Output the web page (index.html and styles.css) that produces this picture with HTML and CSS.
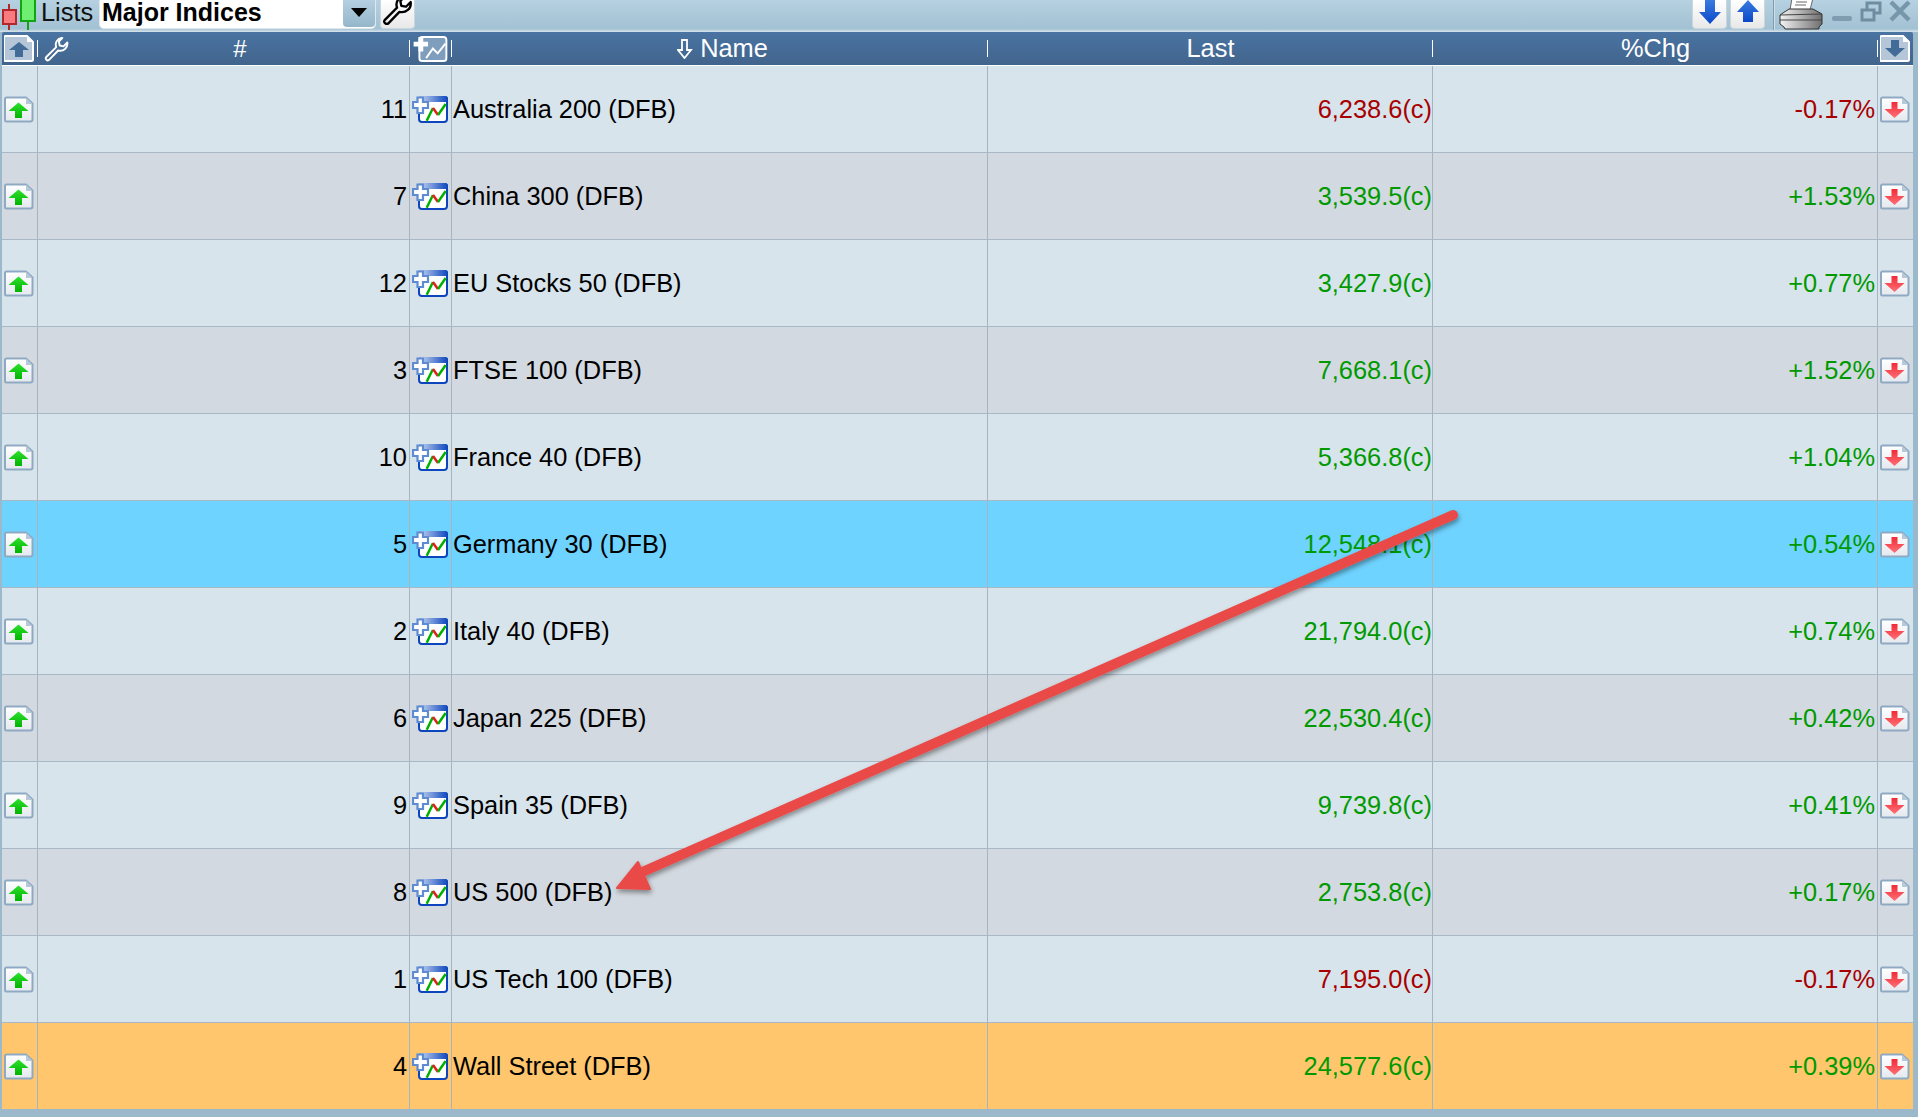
FILE: index.html
```html
<!DOCTYPE html>
<html lang="en">
<head>
<meta charset="utf-8">
<title>Major Indices</title>
<link rel="stylesheet" href="styles.css">
</head>
<body>
<svg class="defs" width="0" height="0">
  <defs>
    <linearGradient id="gDocBody" x1="0" y1="0" x2="0" y2="1"><stop offset="0" stop-color="#ffffff"/><stop offset="1" stop-color="#e4e9ee"/></linearGradient>
    <linearGradient id="gGreen" x1="0" y1="0" x2="0" y2="1"><stop offset="0" stop-color="#2fe02f"/><stop offset="1" stop-color="#00b400"/></linearGradient>
    <linearGradient id="gRed" x1="0" y1="0" x2="0" y2="1"><stop offset="0" stop-color="#f02b35"/><stop offset="1" stop-color="#ff7078"/></linearGradient>
    <linearGradient id="gBlue" x1="0" y1="0" x2="0" y2="1"><stop offset="0" stop-color="#3a7be0"/><stop offset="1" stop-color="#0a48c8"/></linearGradient>
    <linearGradient id="gChartTop" x1="0" y1="0" x2="1" y2="0"><stop offset="0" stop-color="#c8d8f2"/><stop offset="1" stop-color="#0c45bd"/></linearGradient>
    <linearGradient id="gPrinter" x1="0" y1="0" x2="1" y2="0"><stop offset="0" stop-color="#f4f4f4"/><stop offset="1" stop-color="#6e6e6e"/></linearGradient>
    <symbol id="i-up" viewBox="0 0 30 27">
      <path d="M2.500 1.500h19.500l6.500 6v16a2 2 0 0 1-2 2h-24a1.500 1.500 0 0 1-1.500-1.500v-21a1.500 1.500 0 0 1 1.500-1.500z" fill="url(#gDocBody)" stroke="#8fa9c3" stroke-width="2"/>
      <path d="M22 1.500v6.500h6.500z" fill="#b7c8d9"/>
      <path d="M14.500 6.500l10 8.500h-6.500v7h-7v-7h-6.500z" fill="url(#gGreen)"/>
    </symbol>
    <symbol id="i-down" viewBox="0 0 30 27">
      <path d="M2.500 1.500h19.500l6.500 6v16a2 2 0 0 1-2 2h-24a1.500 1.500 0 0 1-1.500-1.500v-21a1.500 1.500 0 0 1 1.500-1.500z" fill="url(#gDocBody)" stroke="#8fa9c3" stroke-width="2"/>
      <path d="M22 1.500v6.500h6.500z" fill="#b7c8d9"/>
      <path d="M11.500 6h6v7h7l-10 9-10-9h7z" fill="url(#gRed)"/>
    </symbol>
    <symbol id="i-chart" viewBox="0 0 36 27">
      <rect x="7" y="1" width="28" height="25" rx="3" fill="#fff" stroke="#0c45bd" stroke-width="2"/>
      <rect x="7" y="0" width="29" height="6" rx="2.500" fill="url(#gChartTop)"/>
      <path d="M14.700 24.700L21 12" fill="none" stroke="#00b000" stroke-width="2.500"/>
      <path d="M21 12l5 7" fill="none" stroke="#e81c1c" stroke-width="2.500"/>
      <path d="M26 19l7.700-11" fill="none" stroke="#00b000" stroke-width="2.500"/>
      <path d="M5.500 1.500h5.500v4.500h5v6h-5v5h-5.500v-5h-4.500v-6h4.500z" fill="#fff" stroke="#5f8bd2" stroke-width="2.200"/>
    </symbol>
    <symbol id="i-wrench" viewBox="0 0 34 32">
      <path d="M3 26.500l13-13c-2-5 1-11 7-12l1 0-4.500 5 1 5 5 1 5-5c1 7-5 12-12 10.500l-11.500 12c-2.500 2.500-6.500-1-4-3.500z" fill="none" stroke="currentColor" stroke-width="2.500" stroke-linejoin="round"/>
    </symbol>
  </defs>
</svg>

<header class="toolbar">
  <svg class="candles" width="35" height="30" viewBox="0 0 35 30">
    <path d="M7 4v26" stroke="#b3262c" stroke-width="2"/>
    <rect x="1" y="10" width="13" height="14" fill="#f77b7f" stroke="#b3262c" stroke-width="2"/>
    <path d="M26 0v30" stroke="#13a413" stroke-width="2"/>
    <rect x="19" y="-2" width="14" height="23" fill="#6fef6f" stroke="#13a413" stroke-width="2"/>
  </svg>
  <span class="lists-label">Lists</span>
  <div class="select">
    <span class="select-text">Major Indices</span>
    <span class="select-btn"><span class="caret"></span></span>
  </div>
  <button class="tool-btn wrench-btn"><svg width="32" height="30"><use href="#i-wrench"/></svg></button>
  <div class="spacer"></div>
  <button class="tool-btn arrow-btn">
    <svg width="22" height="26" viewBox="0 0 22 26"><path d="M6 0h10v12h6l-11 12-11-12h6z" fill="url(#gBlue)"/></svg>
  </button>
  <button class="tool-btn arrow-btn">
    <svg width="22" height="26" viewBox="0 0 22 26"><path d="M11 0l11 12h-6v10h-10v-10h-6z" fill="url(#gBlue)"/></svg>
  </button>
  <span class="tool-sep"></span>
  <svg class="printer" width="44" height="30" viewBox="0 0 44 30">
    <path d="M13 -2h21l-3 12h-20z" fill="#fff" stroke="#666"/>
    <path d="M17 2h11M16 5h11" stroke="#9a9a9a" stroke-width="1.500"/>
    <path d="M1 15l9-6h24l9 5v10l-3 3v2h-34l-1-2-4-3z" fill="url(#gPrinter)" stroke="#333"/>
    <path d="M1 15l41-1M1 20h42" stroke="#444"/>
  </svg>
  <div class="win-controls">
    <svg width="22" height="26" viewBox="0 0 22 26"><rect x="1" y="16" width="20" height="5" rx="2" fill="#7e9db0"/></svg>
    <svg width="22" height="26" viewBox="0 0 22 26"><path d="M7 9v-6h13v10h-6" fill="none" stroke="#6f8da0" stroke-width="3"/><rect x="2" y="10" width="12" height="10" fill="none" stroke="#6f8da0" stroke-width="3"/></svg>
    <svg width="22" height="26" viewBox="0 0 22 26"><path d="M2 2l18 18M20 2l-18 18" stroke="#7696a9" stroke-width="4.500"/></svg>
  </div>
</header>

<main class="grid">
  <div class="row head">
    <div class="cell"><svg class="doc" width="30" height="27" viewBox="0 0 30 27"><path d="M2 1h21l6 6v17.500a1.500 1.500 0 0 1-1.500 1.500h-26a1.500 1.500 0 0 1-1.500-1.500v-22a1.500 1.500 0 0 1 1.500-1.500z" fill="#b5c6d8" stroke="#fff" stroke-width="2"/><path d="M23 1v6h6z" fill="#fff"/><path d="M15 7l10 8h-6v7h-8v-7h-6z" fill="#436b97"/></svg></div>
    <div class="cell c-num"><svg class="head-wrench" width="26" height="26"><use href="#i-wrench"/></svg><span class="head-hash">#</span></div>
    <div class="cell"><svg class="chart-head" width="36" height="26" viewBox="0 0 36 27"><rect x="7" y="1" width="28" height="25" rx="3" fill="#7f9dbc" stroke="#fff" stroke-width="2"/><path d="M14 23l7-10 5 5 8-10" fill="none" stroke="#fff" stroke-width="2"/><path d="M6 1h5v5h5v5h-5v5h-5v-5h-5v-5h5z" fill="#fff"/></svg></div>
    <div class="cell center head-name"><svg class="sort" width="16" height="20" viewBox="0 0 16 20"><path d="M5 1h5v10h4l-6.500 8-6.500-8h4z" fill="none" stroke="#fff" stroke-width="1.800"/></svg>Name</div>
    <div class="cell center">Last</div>
    <div class="cell center">%Chg</div>
    <div class="cell"><svg class="doc" width="30" height="27" viewBox="0 0 30 27"><path d="M2 1h21l6 6v17.500a1.500 1.500 0 0 1-1.500 1.500h-26a1.500 1.500 0 0 1-1.500-1.500v-22a1.500 1.500 0 0 1 1.500-1.500z" fill="#b5c6d8" stroke="#fff" stroke-width="2"/><path d="M23 1v6h6z" fill="#fff"/><path d="M11 5h8v8h6l-10 9-10-9h6z" fill="#436b97"/></svg></div>
  </div>

  <div class="row light"><div class="cell"><svg class="doc" width="30" height="27"><use href="#i-up"/></svg></div><div class="cell num">11</div><div class="cell"><svg class="chart" width="36" height="27"><use href="#i-chart"/></svg></div><div class="cell name">Australia 200 (DFB)</div><div class="cell num last neg">6,238.6(c)</div><div class="cell num neg">-0.17%</div><div class="cell"><svg class="doc" width="30" height="27"><use href="#i-down"/></svg></div></div>
  <div class="row dark"><div class="cell"><svg class="doc" width="30" height="27"><use href="#i-up"/></svg></div><div class="cell num">7</div><div class="cell"><svg class="chart" width="36" height="27"><use href="#i-chart"/></svg></div><div class="cell name">China 300 (DFB)</div><div class="cell num last pos">3,539.5(c)</div><div class="cell num pos">+1.53%</div><div class="cell"><svg class="doc" width="30" height="27"><use href="#i-down"/></svg></div></div>
  <div class="row light"><div class="cell"><svg class="doc" width="30" height="27"><use href="#i-up"/></svg></div><div class="cell num">12</div><div class="cell"><svg class="chart" width="36" height="27"><use href="#i-chart"/></svg></div><div class="cell name">EU Stocks 50 (DFB)</div><div class="cell num last pos">3,427.9(c)</div><div class="cell num pos">+0.77%</div><div class="cell"><svg class="doc" width="30" height="27"><use href="#i-down"/></svg></div></div>
  <div class="row dark"><div class="cell"><svg class="doc" width="30" height="27"><use href="#i-up"/></svg></div><div class="cell num">3</div><div class="cell"><svg class="chart" width="36" height="27"><use href="#i-chart"/></svg></div><div class="cell name">FTSE 100 (DFB)</div><div class="cell num last pos">7,668.1(c)</div><div class="cell num pos">+1.52%</div><div class="cell"><svg class="doc" width="30" height="27"><use href="#i-down"/></svg></div></div>
  <div class="row light"><div class="cell"><svg class="doc" width="30" height="27"><use href="#i-up"/></svg></div><div class="cell num">10</div><div class="cell"><svg class="chart" width="36" height="27"><use href="#i-chart"/></svg></div><div class="cell name">France 40 (DFB)</div><div class="cell num last pos">5,366.8(c)</div><div class="cell num pos">+1.04%</div><div class="cell"><svg class="doc" width="30" height="27"><use href="#i-down"/></svg></div></div>
  <div class="row blue"><div class="cell"><svg class="doc" width="30" height="27"><use href="#i-up"/></svg></div><div class="cell num">5</div><div class="cell"><svg class="chart" width="36" height="27"><use href="#i-chart"/></svg></div><div class="cell name">Germany 30 (DFB)</div><div class="cell num last pos">12,548.1(c)</div><div class="cell num pos">+0.54%</div><div class="cell"><svg class="doc" width="30" height="27"><use href="#i-down"/></svg></div></div>
  <div class="row light"><div class="cell"><svg class="doc" width="30" height="27"><use href="#i-up"/></svg></div><div class="cell num">2</div><div class="cell"><svg class="chart" width="36" height="27"><use href="#i-chart"/></svg></div><div class="cell name">Italy 40 (DFB)</div><div class="cell num last pos">21,794.0(c)</div><div class="cell num pos">+0.74%</div><div class="cell"><svg class="doc" width="30" height="27"><use href="#i-down"/></svg></div></div>
  <div class="row dark"><div class="cell"><svg class="doc" width="30" height="27"><use href="#i-up"/></svg></div><div class="cell num">6</div><div class="cell"><svg class="chart" width="36" height="27"><use href="#i-chart"/></svg></div><div class="cell name">Japan 225 (DFB)</div><div class="cell num last pos">22,530.4(c)</div><div class="cell num pos">+0.42%</div><div class="cell"><svg class="doc" width="30" height="27"><use href="#i-down"/></svg></div></div>
  <div class="row light"><div class="cell"><svg class="doc" width="30" height="27"><use href="#i-up"/></svg></div><div class="cell num">9</div><div class="cell"><svg class="chart" width="36" height="27"><use href="#i-chart"/></svg></div><div class="cell name">Spain 35 (DFB)</div><div class="cell num last pos">9,739.8(c)</div><div class="cell num pos">+0.41%</div><div class="cell"><svg class="doc" width="30" height="27"><use href="#i-down"/></svg></div></div>
  <div class="row dark"><div class="cell"><svg class="doc" width="30" height="27"><use href="#i-up"/></svg></div><div class="cell num">8</div><div class="cell"><svg class="chart" width="36" height="27"><use href="#i-chart"/></svg></div><div class="cell name">US 500 (DFB)</div><div class="cell num last pos">2,753.8(c)</div><div class="cell num pos">+0.17%</div><div class="cell"><svg class="doc" width="30" height="27"><use href="#i-down"/></svg></div></div>
  <div class="row light"><div class="cell"><svg class="doc" width="30" height="27"><use href="#i-up"/></svg></div><div class="cell num">1</div><div class="cell"><svg class="chart" width="36" height="27"><use href="#i-chart"/></svg></div><div class="cell name">US Tech 100 (DFB)</div><div class="cell num last neg">7,195.0(c)</div><div class="cell num neg">-0.17%</div><div class="cell"><svg class="doc" width="30" height="27"><use href="#i-down"/></svg></div></div>
  <div class="row orange"><div class="cell"><svg class="doc" width="30" height="27"><use href="#i-up"/></svg></div><div class="cell num">4</div><div class="cell"><svg class="chart" width="36" height="27"><use href="#i-chart"/></svg></div><div class="cell name">Wall Street (DFB)</div><div class="cell num last pos">24,577.6(c)</div><div class="cell num pos">+0.39%</div><div class="cell"><svg class="doc" width="30" height="27"><use href="#i-down"/></svg></div></div>
</main>

<svg class="annotation" width="1918" height="1117" viewBox="0 0 1918 1117">
  <defs><filter id="shadow" x="-5%" y="-5%" width="110%" height="110%"><feDropShadow dx="1" dy="3" stdDeviation="2.500" flood-color="#000" flood-opacity="0.4"/></filter></defs>
  <g filter="url(#shadow)">
    <path d="M1453 515L640 873" fill="none" stroke="#e94a47" stroke-width="10" stroke-linecap="round"/>
    <path d="M617 888L638 862L650 889z" fill="#e94a47" stroke="#e94a47" stroke-width="2" stroke-linejoin="round"/>
  </g>
</svg>
</body>
</html>
```
FILE: styles.css
```css
* { box-sizing: border-box; }
html, body { margin: 0; padding: 0; }
body {
  width: 1918px;
  height: 1117px;
  overflow: hidden;
  background: #9bb9cb;
  font-family: "Liberation Sans", Arial, sans-serif;
  position: relative;
}
.defs { position: absolute; }

.toolbar {
  height: 32px;
  display: flex;
  align-items: flex-start;
  overflow: hidden;
  padding-left: 2px;
  background: linear-gradient(#b6d1e1, #a2c1d3 90%, #d9e5ec);
}
.candles { flex: none; margin-right: 4px; }
.lists-label { font-size: 25.4px; line-height: 24px; width: 58px; color: #111; }
.select {
  width: 277px;
  height: 29px;
  background: #fff;
  border-radius: 0 0 5px 5px;
  display: flex;
  justify-content: space-between;
  border: 1px solid #dfe8ee;
  border-top: 0;
}
.select-text { font-size: 25px; line-height: 24px; font-weight: 700; color: #000; padding-left: 2px; }
.select-btn {
  width: 32px;
  height: 27px;
  border-radius: 0 0 4px 4px;
  background: linear-gradient(#b4cfe0, #95b6ca);
  display: flex;
  justify-content: center;
  padding-top: 8px;
}
.caret {
  width: 0; height: 0;
  border-left: 8px solid transparent;
  border-right: 8px solid transparent;
  border-top: 9px solid #000;
}
.tool-btn {
  padding: 0;
  border: 1px solid #c9d6de;
  border-top: 0;
  border-radius: 0 0 4px 4px;
  background: linear-gradient(#ffffff, #e8e8e8);
  height: 29px;
  display: flex;
  justify-content: center;
  align-items: flex-start;
}
.wrench-btn { width: 35px; margin-left: 4px; color: #000; overflow: hidden; }
.wrench-btn svg { margin-top: -5px; }
.arrow-btn { width: 35px; margin-right: 3px; }
.spacer { flex: 1; }
.tool-sep { width: 2px; height: 30px; margin: 0 4px 0 5px; background: #7f9db0; border-right: 1px solid #cfdfe8; }
.printer { flex: none; margin-right: 8px; }
.win-controls { display: flex; gap: 7px; width: 87px; }

.grid { margin: 0 5px 0 2px; }
.row {
  display: grid;
  grid-template-columns: 36px 372px 42px 536px 445px 445px 35px;
  height: 87px;
  font-size: 25.4px;
  border-bottom: 1px solid #a8b8c6;
}
.row:last-child { height: 86px; border-bottom: 0; }
.cell {
  display: flex;
  align-items: center;
  border-right: 1px solid #a6b4c0;
  color: #000;
  min-width: 0;
  white-space: nowrap;
}
.cell:last-child { border-right: 0; }
.num { justify-content: flex-end; padding-right: 2px; }
.last { padding-right: 0; }
.name { padding-left: 1px; }
.pos { color: #009a00; }
.neg { color: #a80000; }
.doc { margin-left: 2px; flex: none; }
.chart { margin-left: 2px; flex: none; }

.light { background: #d8e4ec; }
.dark { background: #d3d9e0; }
.blue { background: #6fd3ff; }
.orange { background: #ffc66d; }

.head {
  height: 34px;
  font-size: 25.4px;
  background: linear-gradient(#4a74a2, #41648c);
  border-bottom: 1px solid #fff;
  border-radius: 2px 2px 0 0;
}
.head .cell { color: #fff; border-right: 0; position: relative; }
.head .cell::after {
  content: "";
  position: absolute;
  right: 0;
  top: 8px;
  height: 17px;
  width: 1px;
  background: #fff;
}
.head .cell:last-child::after { display: none; }
.center { justify-content: center; }
.head-name { padding-left: 5px; }
.c-num { justify-content: center; padding-left: 32px; }
.head-wrench { position: absolute; left: 6px; top: 4px; color: #fff; }
.head-hash { font-size: 24px; font-weight: 400; }
.chart-head { margin-left: 2px; }
.sort { margin-right: 7px; }

.annotation { position: absolute; left: 0; top: 0; pointer-events: none; }
```
